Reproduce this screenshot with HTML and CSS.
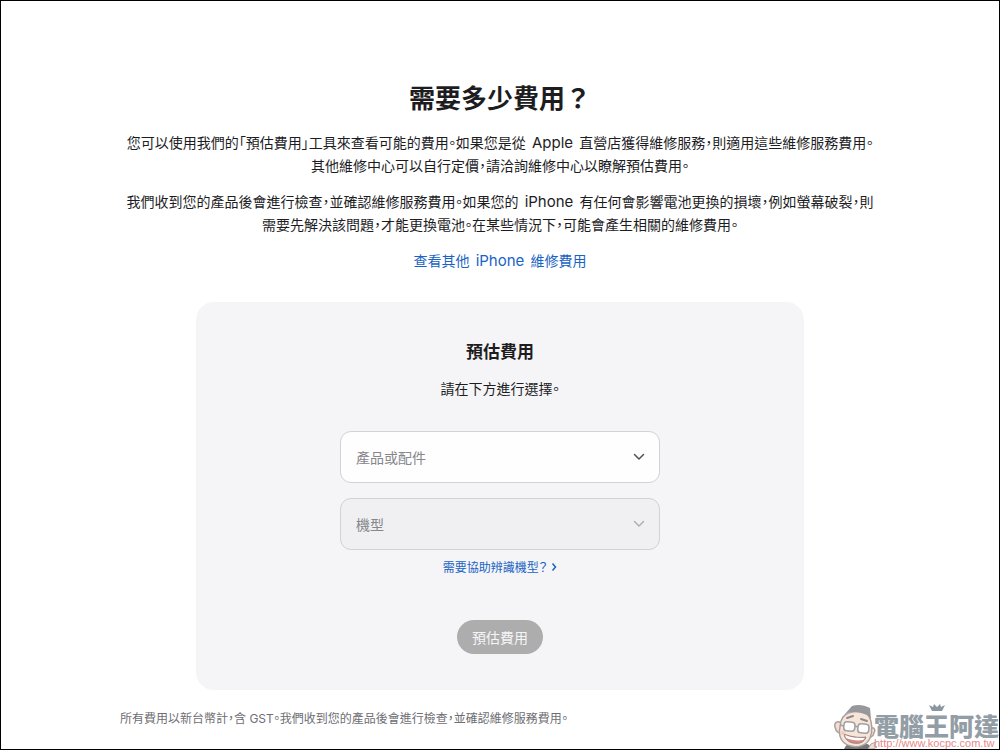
FILE: index.html
```html
<!DOCTYPE html>
<html lang="zh-Hant-TW">
<head>
  <meta charset="UTF-8">
  <meta name="viewport" content="width=device-width, initial-scale=1.0">
  <title>需要多少費用？</title>
  <link rel="stylesheet" href="styles.css">
</head>
<body>
  <main class="container">
    <section class="intro">
      <h1>需要多少費用？</h1>
      <p>您可以使用我們的「預估費用」工具來查看可能的費用。如果您是從 <span class="latin">Apple</span> 直營店獲得維修服務，則適用這些維修服務費用。<br>其他維修中心可以自行定價，請洽詢維修中心以瞭解預估費用。</p>
      <p>我們收到您的產品後會進行檢查，並確認維修服務費用。如果您的 <span class="latin">iPhone</span> 有任何會影響電池更換的損壞，例如螢幕破裂，則<br>需要先解決該問題，才能更換電池。在某些情況下，可能會產生相關的維修費用。</p>
      <a class="other-link" href="#">查看其他 <span class="latin">iPhone</span> 維修費用</a>
    </section>

    <form class="card">
      <h2>預估費用</h2>
      <p>請在下方進行選擇。</p>

      <div class="field">
        <select id="product" aria-label="產品或配件">
          <option>產品或配件</option>
        </select>
        <svg class="chevron" viewBox="0 0 12 8" aria-hidden="true"><path d="M1.5 1.5 6 6l4.5-4.5"/></svg>
      </div>

      <div class="field disabled">
        <select id="model" aria-label="機型" disabled>
          <option>機型</option>
        </select>
        <svg class="chevron" viewBox="0 0 12 8" aria-hidden="true"><path d="M1.5 1.5 6 6l4.5-4.5"/></svg>
      </div>

      <a class="help-link" href="#">需要協助辨識機型？<svg viewBox="0 0 6 10" aria-hidden="true"><path d="M1.5 1.5 4.5 5l-3 3.5"/></svg></a>

      <button class="submit" type="submit" disabled>預估費用</button>
    </form>

    <p class="footnote">所有費用以新台幣計，含 GST。我們收到您的產品後會進行檢查，並確認維修服務費用。</p>
  </main>

  <div class="watermark">
    <svg class="face" viewBox="0 0 46 46" aria-hidden="true">
      <path d="M12 46c2-5 5-6 9-5l10 1c4-2 7-1 8 4z" fill="#77777a"/>
      <path d="M9 20c-4-3-7 0-6 4 1 5 4 7 7 5zM38 25c4-1 6 1 4 5-1 4-4 5-7 4z" fill="#f5ded0" stroke="#aaa29e" stroke-width="1.5"/>
      <path d="M11 14c5-6 21-8 26-1 3 6 4 15 1 22-3 7-11 10-19 8C9 41 6 32 8 24c0-4 1-7 3-10z" fill="#f8e5d9" stroke="#aaa29e" stroke-width="1.5"/>
      <path d="M13 11 20 3c6-2 12-1 18 2l1 11-4-4c-7-3-14-4-20-2l-4 5z" fill="#96989b"/>
      <path d="m15 15 6-2M29 16l6 2" fill="none" stroke="#8f8b89" stroke-width="2" stroke-linecap="round"/>
      <g fill="#fff" stroke="#a0a1a3" stroke-width="1.5">
        <rect x="12" y="19" width="11" height="9" rx="3" transform="rotate(5 18 22)"/>
        <rect x="26" y="21" width="11" height="9" rx="3" transform="rotate(5 32 24)"/>
        <path d="m23 23 3 1M8 22l4 1"/>
      </g>
      <path d="M12 31c7 3 15 4 22 3-2 6-7 7-13 6-5-1-8-4-9-9z" fill="#d88984" stroke="#958581" stroke-width="1"/>
      <path d="M13 32c7 3 13 3 20 3l-2 2c-6 1-12 0-17-2z" fill="#fff"/>
      <circle cx="11" cy="30" r="2" fill="#f4c9bd"/>
      <path d="m36 46 3-5 5-2-2 4 3 1-4 2z" fill="#f5ded0" stroke="#aaa29e"/>
    </svg>
    <svg class="crown" viewBox="0 0 18 8" aria-hidden="true"><path d="m1 2 4 2 1-3 3 3 3-3 1 3 4-2-3 6H4z"/></svg>
    <div class="watermark-text">
      <strong>電腦王阿達</strong>
      <span>http://www.kocpc.com.tw</span>
    </div>
  </div>
</body>
</html>
```
FILE: styles.css
```css
* {
  margin: 0;
  padding: 0;
  box-sizing: border-box;
}

body {
  position: relative;
  min-height: 100vh;
  border: 1px solid #000;
  background-color: #fff;
  color: #1d1d1f;
  font-family: "Noto Sans CJK TC", sans-serif;
  font-size: 14px;
  line-height: 23px;
  font-feature-settings: "palt"; /* Narrow punctuation */
  overflow-x: hidden;
}

a {
  color: #1a63c4;
  text-decoration: none;
}

a:hover {
  text-decoration: underline;
}

.container {
  max-width: 760px;
  margin: 0 auto;
  padding: 78px 0 10px;
}

.intro {
  text-align: center;
}

.latin {
  padding: 0 3px;
  font-family: Inter, sans-serif;
  font-size: 15px;
}

h1 {
  font-size: 26px;
  line-height: 36px;
  font-weight: 700;
  font-feature-settings: normal;
  margin-bottom: 16px;
}

.intro p {
  margin-bottom: 13px;
}

.other-link {
  display: block;
}

/* Estimate form */
.card {
  display: flex;
  flex-direction: column;
  align-items: center;
  width: 80%;
  margin: 30px auto 17px;
  padding: 37px 20px 36px;
  border-radius: 18px;
  background-color: #f5f5f7;
}

.card h2 {
  font-size: 17px;
  line-height: 24px;
  font-weight: 700;
  margin-bottom: 14px;
}

.card p {
  margin-bottom: 31px;
}

.field {
  position: relative;
  width: 100%;
  max-width: 320px;
  margin-bottom: 15px;
}

.field select {
  display: block;
  width: 100%;
  height: 52px;
  padding: 0 40px 0 15px;
  border: 1px solid #d2d2d7;
  border-radius: 11px;
  background-color: #fefefe;
  color: #86868b;
  font-family: inherit;
  font-size: 14px;
  appearance: none;
}

.field.disabled {
  margin-bottom: 5px;
}

.disabled select {
  background-color: #f0f0f2;
  opacity: 1;
}

.chevron {
  position: absolute;
  top: 22px;
  right: 15px;
  width: 12px;
  height: 8px;
  fill: none;
  stroke: #515154;
  stroke-width: 1.5;
  stroke-linecap: round;
  stroke-linejoin: round;
  pointer-events: none;
}

.disabled .chevron {
  stroke: #b0b0b4;
}

.help-link {
  display: flex;
  align-items: center;
  gap: 4px;
  margin-bottom: 42px;
  font-size: 12px;
}

.help-link svg {
  width: 6px;
  height: 10px;
  fill: none;
  stroke: currentColor;
  stroke-width: 1.5;
}

.submit {
  padding: 5px 15px;
  border: none;
  border-radius: 17px;
  background-color: #adadae;
  color: #f5f5f7;
  font-family: inherit;
  font-size: 14px;
  line-height: 24px;
}

.footnote {
  color: #6e6e73;
  font-family: Inter, "Noto Sans CJK TC", sans-serif;
  font-size: 12px;
}

/* Site mark in the corner */
.watermark {
  position: absolute;
  right: 0;
  bottom: 0;
  display: flex;
  align-items: flex-end;
}

.face {
  width: 46px;
  height: 46px;
  margin-right: -4px;
}

.crown {
  position: absolute;
  top: 0;
  right: 53px;
  width: 18px;
  height: 8px;
  fill: #8a97a0;
}

.watermark-text {
  display: flex;
  flex-direction: column;
}

.watermark strong {
  color: #929da5;
  font-size: 25px;
  font-weight: 900;
  line-height: 26px;
}

.watermark span {
  color: #e58a8a;
  font-family: "Liberation Sans", sans-serif;
  font-size: 11px;
  line-height: 11px;
}
```
